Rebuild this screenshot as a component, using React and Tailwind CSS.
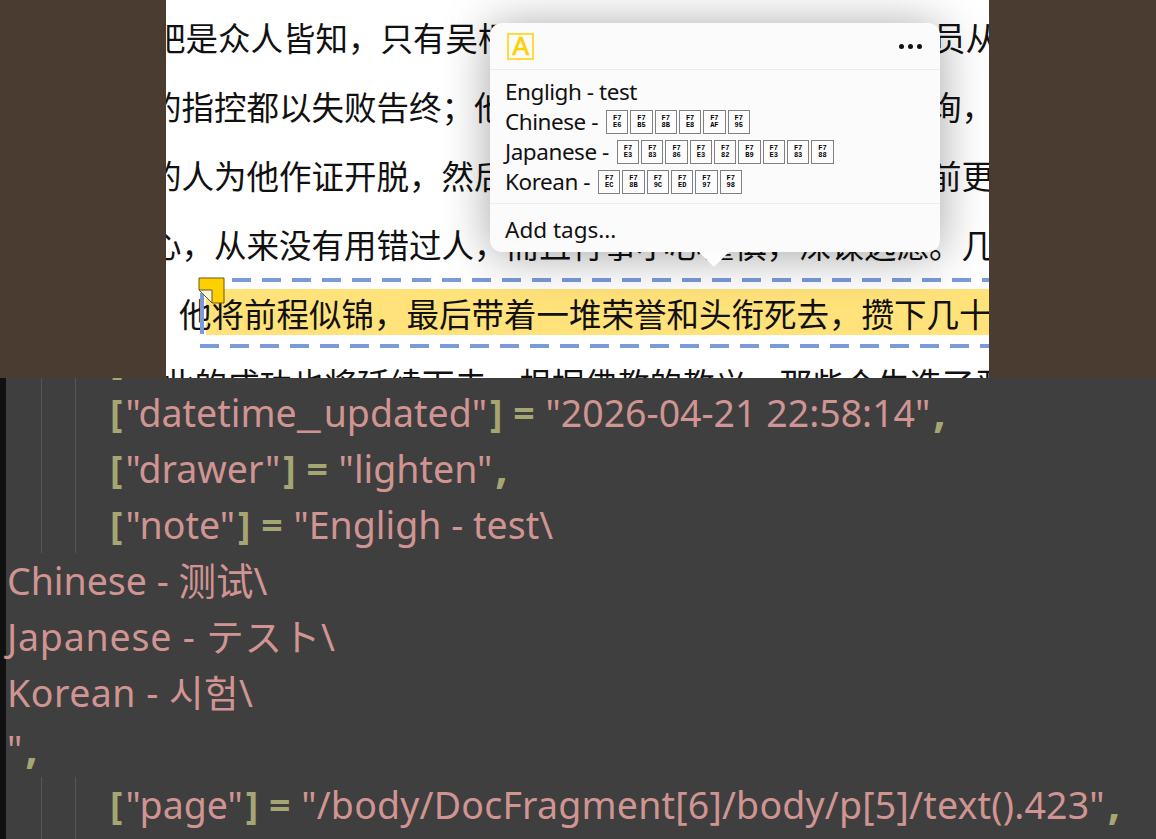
const sans = 'font-["Noto_Sans","Noto_Sans_CJK_SC",sans-serif]'

// the stretch hidden behind the popup stays blank, U+3000 keeps the grid
const gap = '\u3000'.repeat(13)

const pageLines = [
  { text: `吧是众人皆知，只有吴桐${gap}员从`, offset: '-ml-[13px]' },
  { text: `的指控都以失败告终；他${gap}询，`, offset: '-ml-[17px]' },
  { text: `的人为他作证开脱，然后${gap}前更`, offset: '-ml-[17px]' },
  { text: '心，从来没有用错过人，而且行事小心谨慎，深谋远虑。几', offset: '-ml-[17px]' },
]

const tofu = {
  chinese: ['E6', 'B5', '8B', 'E8', 'AF', '95'],
  japanese: ['E3', '83', '86', 'E3', '82', 'B9', 'E3', '83', '88'],
  korean: ['EC', '8B', '9C', 'ED', '97', '98'],
}

function Tofu({ codes }) {
  return (
    <span className="ml-[8px] inline-flex gap-[2px] align-middle">
      {codes.map((code, i) => (
        <span
          key={i}
          className='flex h-[24px] w-[22.3px] flex-col items-center justify-center border border-[#808080] bg-[#fcfcfc] font-["Liberation_Mono",monospace] text-[7px] font-bold leading-[7px] tracking-[0px] text-black'
        >
          <span>F7</span>
          <span>{code}</span>
        </span>
      ))}
    </span>
  )
}

function NoteLine({ label, codes }) {
  return (
    <div className="flex h-[30px] items-center whitespace-nowrap">
      <span>{label}</span>
      {codes && <Tofu codes={codes} />}
    </div>
  )
}

function Popup() {
  return (
    <div className={`absolute left-[490px] top-[23px] z-10 h-[229px] w-[450px] rounded-[12px] bg-[#fbfbfb] text-[22.5px] tracking-[-0.45px] text-[#111] shadow-[0_3px_48px_rgba(0,0,0,0.36)] ${sans}`}>
      <div className="flex h-[47px] items-center justify-between border-b border-[#ececec] pl-[17px] pr-[18px]">
        <span className='flex h-[27px] w-[27px] items-center justify-center border-[2px] border-[#ffdc3c] font-["Liberation_Sans",sans-serif] text-[25px] leading-none text-[#ffd000] [-webkit-text-stroke:0.7px_#ffd000]'>A</span>
        <span className="flex gap-[4px]">
          <span className="h-[5px] w-[5px] rounded-full bg-[#111]" />
          <span className="h-[5px] w-[5px] rounded-full bg-[#111]" />
          <span className="h-[5px] w-[5px] rounded-full bg-[#111]" />
        </span>
      </div>
      <div className="h-[134px] border-b border-[#ececec] px-[15px] pt-[7px]">
        <NoteLine label="Engligh - test" />
        <NoteLine label="Chinese -" codes={tofu.chinese} />
        <NoteLine label="Japanese -" codes={tofu.japanese} />
        <NoteLine label="Korean -" codes={tofu.korean} />
      </div>
      <div className="flex h-[48px] items-center px-[15px] pt-[4px] tracking-[0px]">Add tags...</div>
      {/* little pointer under the popup */}
      <svg className="absolute left-[209px] top-[229px]" width="30" height="15" viewBox="0 0 30 15">
        <path d="M0 0 L30 0 L15 15 Z" fill="#fdfdfd" />
      </svg>
    </div>
  )
}

function Reader() {
  return (
    <div className="relative flex h-[378px] shrink-0 justify-center overflow-hidden bg-[#4a3c30] pr-[1px]">
      <div className='w-[823px] overflow-hidden bg-white font-["Noto_Sans_CJK_SC",sans-serif] text-[32.5px] text-[#111]'>
        <div className="pt-[2px]">
          {pageLines.map((line) => (
            <div key={line.text} className={`h-[69px] whitespace-pre leading-[69px] ${line.offset}`}>
              {line.text}
            </div>
          ))}
        </div>
        <div className="relative h-[69px]">
          <div className="absolute left-[36px] right-0 top-[0px] h-[4px] bg-[repeating-linear-gradient(90deg,#7b9ad8_0,#7b9ad8_19px,transparent_19px,transparent_30px)]" />
          <div className="absolute left-[40px] right-0 top-[11px] h-[46px] bg-[#ffe27a]" />
          <div className="relative whitespace-nowrap pl-[13px] leading-[69px]">他将前程似锦，最后带着一堆荣誉和头衔死去，攒下几十</div>
          <div className="absolute left-[34px] top-[15px] h-[41px] w-[4px] bg-[#7b9ad8]" />
          <svg className="absolute left-[32px] -top-[1px]" width="27" height="27" viewBox="0 0 27 27">
            <path d="M1 1 H26 V26 H14 L1 13 Z" fill="#ffd000" stroke="#6b5a10" strokeWidth="1" />
            <path d="M1 13 H14 V26 Z" fill="#fff6c8" stroke="#555" strokeWidth="1" />
          </svg>
          <div className="absolute left-[34px] right-0 top-[66px] h-[4px] bg-[repeating-linear-gradient(90deg,#7b9ad8_0,#7b9ad8_19px,transparent_19px,transparent_30px)]" />
        </div>
        <div className="-ml-[4px] mt-[1px] whitespace-nowrap leading-[69px]">此的成功也将延续下去。根据佛教的教义，那些众生造了恶</div>
      </div>
      <Popup />
    </div>
  )
}

function Key({ children, className }) {
  return <span className={`font-bold text-[#a5a672] ${className ?? ''}`}>{children}</span>
}

function Str({ children, className }) {
  return <span className={`text-[#d09592] ${className ?? ''}`}>{children}</span>
}

function Comma() {
  return <Key className="ml-[3px] text-[44px] leading-[0]">,</Key>
}

// [key] = part of a field line, the brackets sit wider than the font's own spacing
function Field({ name, children }) {
  return (
    <>
      <Key className="mr-[3px]">[</Key>
      <Str>{name}</Str>
      <Key className="ml-[3px]">]</Key>
      {' '}
      <Key className="mx-[1px]">=</Key>
      {' '}
      {children}
    </>
  )
}

function Indented({ children }) {
  return (
    <div className="flex h-[56px] pl-[35px]">
      <span className="w-[34px] shrink-0 border-l border-[#565656]" />
      <span className="w-[35px] shrink-0 border-l border-[#565656]" />
      <div className="whitespace-pre">{children}</div>
    </div>
  )
}

function Bare({ children }) {
  return <div className="h-[56px] whitespace-pre pl-[1px]">{children}</div>
}

function CodePane() {
  return (
    <div className={`flex min-h-0 flex-1 overflow-hidden bg-[#3f3f3f] text-[37.5px] leading-[56px] ${sans}`}>
      <div className="w-[6px] shrink-0 bg-[#111111]" />
      <div className="-mt-[49px] flex-1">
        <Indented><Key className="relative top-[3px]">[</Key></Indented>
        <Indented>
          <Field name={<>"datetime<span className="inline-block w-[27px] origin-left scale-x-[1.42]">_</span>updated"</>}>
            <Str>"2026-04-21 22:58:14"</Str><Comma />
          </Field>
        </Indented>
        <Indented>
          <Field name='"drawer"'>
            <Str>"lighten"</Str><Comma />
          </Field>
        </Indented>
        <Indented>
          <Field name='"note"'>
            <Str>"Engligh - test\</Str>
          </Field>
        </Indented>
        <Bare><Str>Chinese - 测试\</Str></Bare>
        <Bare><Str className="tracking-[0.8px]">Japanese - テスト\</Str></Bare>
        <Bare><Str className="tracking-[0.5px]">Korean - 시험\</Str></Bare>
        <Bare><Str>"</Str><Comma /></Bare>
        <Indented>
          <Field name='"page"'>
            <Str className="tracking-[0.2px]">"/body/DocFragment[6]/body/p[5]/text().423"</Str><Comma />
          </Field>
        </Indented>
        <Indented>{' '}</Indented>
      </div>
    </div>
  )
}

export default function App() {
  return (
    <div className="flex h-[839px] w-[1156px] flex-col overflow-hidden">
      <Reader />
      <CodePane />
    </div>
  )
}
